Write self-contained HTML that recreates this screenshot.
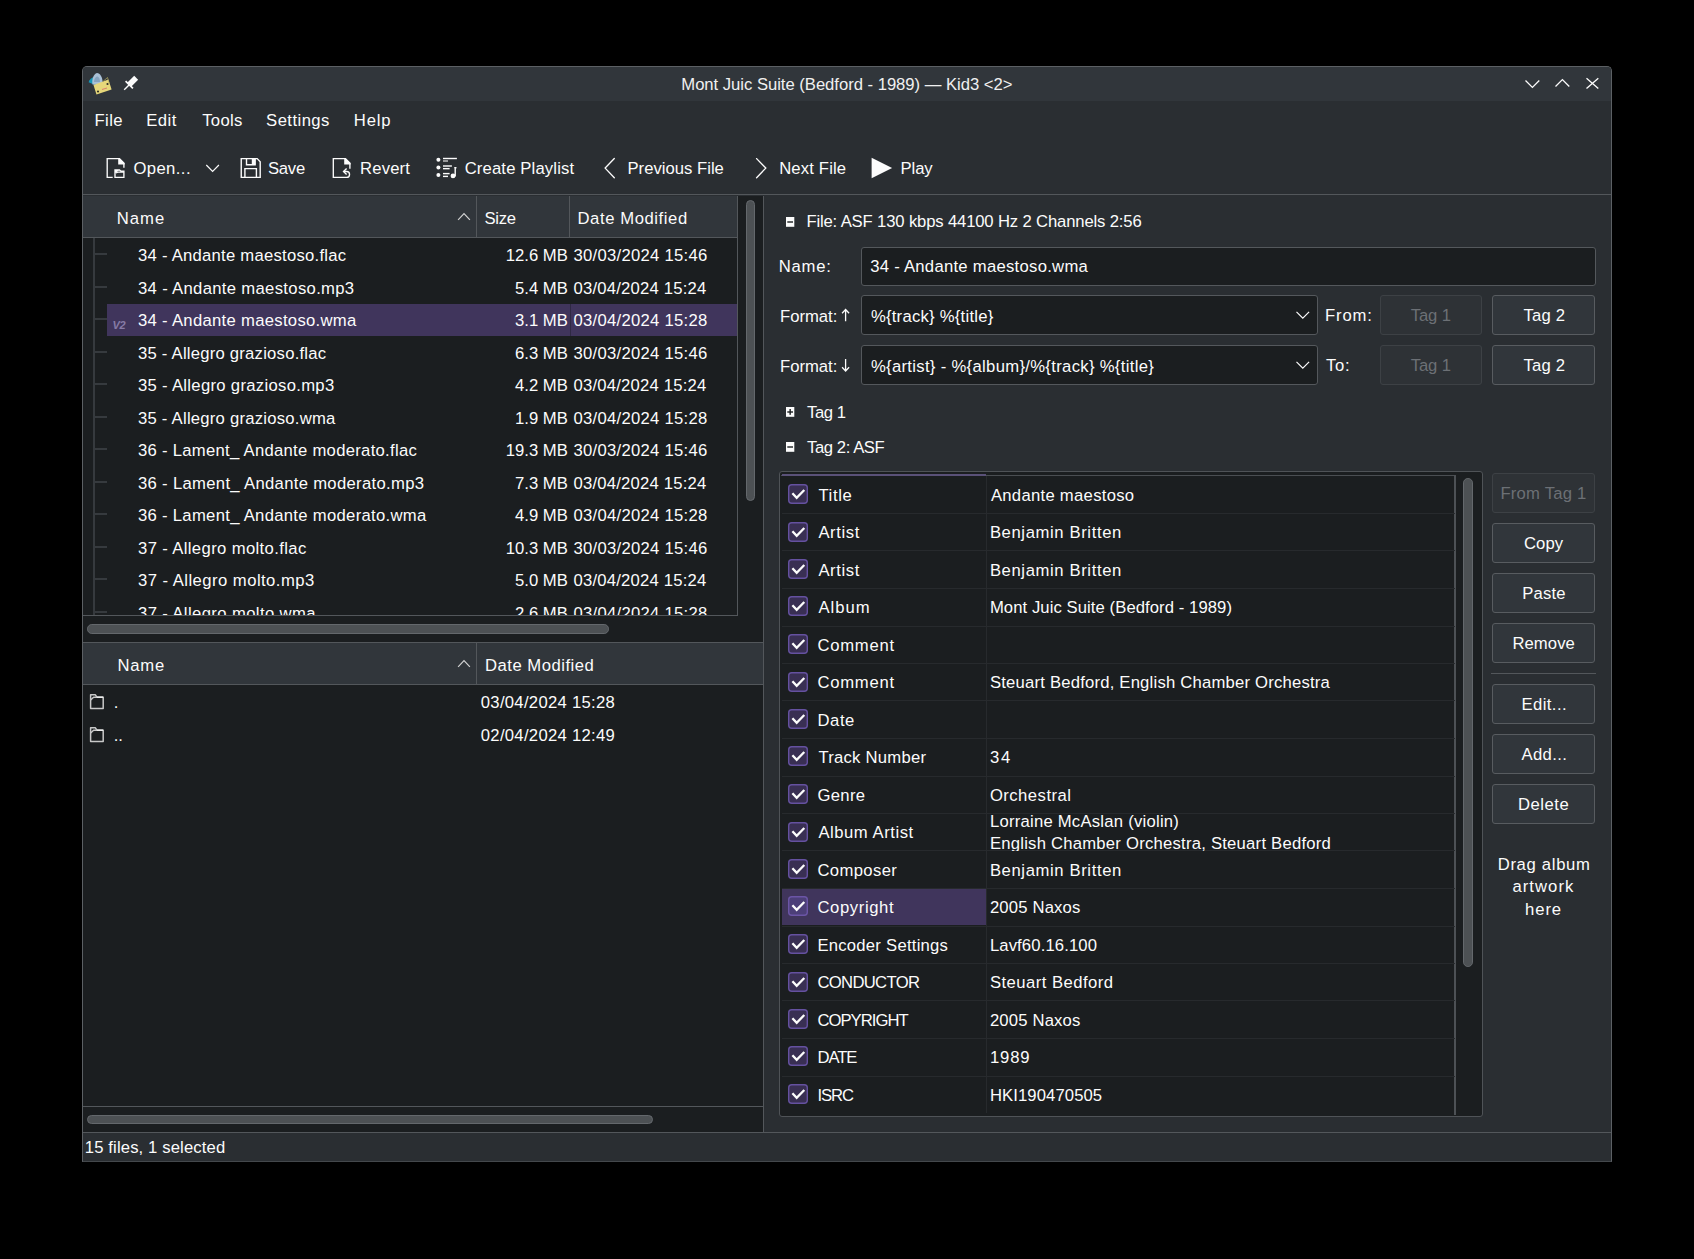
<!DOCTYPE html>
<html><head><meta charset="utf-8"><style>
html,body{margin:0;padding:0;background:#000;}
body{width:1694px;height:1259px;position:relative;overflow:hidden;font-family:"Liberation Sans",sans-serif;font-size:16.67px;color:#fcfcfc;}
div{position:absolute;}
.t{line-height:20px;white-space:pre;}
</style></head><body>
<div style="left:82px;top:66px;width:1530px;height:1096px;background:#2a2e32;border:1px solid #5c6064;border-bottom-color:#44484c;box-sizing:border-box;border-radius:5px 5px 0 0;"></div><div style="left:83px;top:67px;width:1528px;height:34px;background:#31363b;border-radius:4px 4px 0 0;"></div><svg style="position:absolute;left:70px;top:55px;" width="50" height="50" viewBox="0 0 50 50">
<path d="M18.6 27.3 C19.5 24.5 21.5 22.5 24 22 L25 30 Z" fill="#1596b8"/>
<path d="M22.5 29.5 C21.5 25 23.5 18.5 27 18 C30 18 32.5 22 32.6 27 L29 30 Z" fill="#a9c0d6"/>
<path d="M24 27 C24 24 25.5 21.5 27.5 21.5 C29 22 30 24 30 27 Z" fill="#86a3bf"/>
<path d="M23.5 30 L38.4 24.4 L41.6 34.6 L26.5 39.6 Z" fill="#e6d77a"/>
<path d="M33 26.5 L37.5 22.5 L39 28" fill="none" stroke="#b8ad60" stroke-width="0.7"/>
<circle cx="28" cy="36.5" r="1.1" fill="#2f3024"/><circle cx="37.5" cy="29" r="1.1" fill="#2f3024"/>
<path d="M32 34.5 L37 33" stroke="#d96a6a" stroke-width="0.8"/>
</svg><svg style="position:absolute;left:120px;top:74px;" width="20" height="20" viewBox="0 0 20 20">
<g transform="rotate(45 10 10)">
<rect x="7.2" y="1.3" width="5.6" height="9.5" fill="#fcfcfc"/>
<rect x="4.8" y="10.2" width="10.4" height="1.7" fill="#fcfcfc"/>
<rect x="9.3" y="11" width="1.4" height="7.2" fill="#fcfcfc"/>
</g></svg><div class="t" style="left:681.30px;top:74.50px;letter-spacing:-0.031px;color:#f0f0f0;">Mont Juic Suite (Bedford - 1989) — Kid3 &lt;2&gt;</div><svg style="position:absolute;left:1520px;top:72px;" width="90" height="24" viewBox="0 0 90 24">
<g fill="none" stroke="#fcfcfc" stroke-width="1.3">
<path d="M5.5 8.5 L12.4 15.4 L19.3 8.5"/>
<path d="M35.5 14.5 L42.4 7.6 L49.3 14.5"/>
<path d="M66.5 6.3 L78.3 16.6 M78.3 6.3 L66.5 16.6"/>
</g></svg><div class="t" style="left:94.50px;top:110.80px;letter-spacing:0.400px;">File</div><div class="t" style="left:146.30px;top:110.80px;letter-spacing:0.433px;">Edit</div><div class="t" style="left:202.20px;top:110.80px;letter-spacing:0.300px;">Tools</div><div class="t" style="left:266.10px;top:110.80px;letter-spacing:0.443px;">Settings</div><div class="t" style="left:353.80px;top:110.80px;letter-spacing:0.800px;">Help</div><svg style="position:absolute;left:100px;top:152px;" width="32" height="32" viewBox="0 0 32 32">
<g fill="none" stroke="#fcfcfc" stroke-width="1.35">
<path d="M12.7 25.4 H7.2 V6.6 H19.3 L23.9 11.2 V15.8"/>
<path d="M15 25.4 V18 H19.5 L21 19.2 H23.9 V25.4 Z"/>
<path d="M16 21 L17.6 20.1 H23.9"/>
</g>
<path d="M18.2 6.2 H19.8 L24.6 11 V12.4 H18.2 Z" fill="#fcfcfc"/>
<path d="M15 18 H19 L16 20.8 H15 Z" fill="#fcfcfc"/>
</svg><div class="t" style="left:133.40px;top:158.80px;letter-spacing:0.417px;">Open...</div><svg style="position:absolute;left:202px;top:160px;" width="20" height="16" viewBox="0 0 20 16"><path d="M4.3 5 L10.6 11.3 L16.9 5" fill="none" stroke="#fcfcfc" stroke-width="1.2"/></svg><svg style="position:absolute;left:234px;top:152px;" width="32" height="32" viewBox="0 0 32 32">
<g fill="none" stroke="#fcfcfc" stroke-width="1.4">
<path d="M7.24 6.6 H23.2 L26.2 9.8 V25.4 H7.24 Z"/>
<path d="M12.5 6.6 V12.8 H21.1 V6.6"/>
<path d="M10.9 25.4 V16.6 H22.4 V25.4"/>
</g>
<rect x="17.8" y="6.9" width="3.6" height="5.9" fill="#fcfcfc"/>
</svg><div class="t" style="left:268.00px;top:158.80px;letter-spacing:-0.267px;">Save</div><svg style="position:absolute;left:326px;top:152px;" width="32" height="32" viewBox="0 0 32 32">
<g fill="none" stroke="#fcfcfc" stroke-width="1.35">
<path d="M23.9 16.8 V11.2 L19.3 6.6 H7.3 V25.4 H20.6 A2.95 2.95 0 0 0 20.6 19.5 H17.8"/>
<path d="M20.6 16.4 L17.5 19.5 L20.6 22.6"/>
</g>
<path d="M18.2 6.2 H19.8 L24.6 11 V12.4 H18.2 Z" fill="#fcfcfc"/>
</svg><div class="t" style="left:360.00px;top:158.80px;letter-spacing:0.180px;">Revert</div><svg style="position:absolute;left:430px;top:152px;" width="32" height="32" viewBox="0 0 32 32">
<g fill="#fcfcfc">
<circle cx="8.4" cy="7.75" r="2"/><circle cx="8.4" cy="15.4" r="2"/><circle cx="8.4" cy="23" r="2"/>
<rect x="13" y="5.8" width="13.9" height="1.4"/><rect x="13" y="8.3" width="5" height="1.4" opacity="0.75"/>
<rect x="13" y="13.3" width="8.9" height="1.4"/><rect x="13" y="15.95" width="6.6" height="1.4"/>
<rect x="13" y="20.9" width="6.6" height="1.4"/><rect x="13" y="23.7" width="5" height="1.4"/>
<rect x="24.5" y="15" width="1.4" height="9.5"/><path d="M24.5 15 L26.8 15.4 L26.8 16.2 L24.5 16.2Z"/><circle cx="23" cy="23.9" r="2.4"/>
</g></svg><div class="t" style="left:464.70px;top:158.80px;letter-spacing:0.143px;">Create Playlist</div><svg style="position:absolute;left:596px;top:152px;" width="32" height="32" viewBox="0 0 32 32"><path d="M18.3 6.5 L9.15 16.1 L18.3 25.7" fill="none" stroke="#fcfcfc" stroke-width="1.35" stroke-linecap="round"/></svg><div class="t" style="left:627.50px;top:158.80px;letter-spacing:0.008px;">Previous File</div><svg style="position:absolute;left:748px;top:152px;" width="32" height="32" viewBox="0 0 32 32"><path d="M8.6 6.6 L17.8 16.1 L8.6 25.7" fill="none" stroke="#fcfcfc" stroke-width="1.35" stroke-linecap="round"/></svg><div class="t" style="left:779.20px;top:158.80px;letter-spacing:0.150px;">Next File</div><svg style="position:absolute;left:864px;top:152px;" width="32" height="32" viewBox="0 0 32 32"><path d="M7.6 5.7 L28.1 16.1 L7.6 26.2 Z" fill="#fcfcfc"/></svg><div class="t" style="left:900.40px;top:158.80px;letter-spacing:-0.033px;">Play</div><div style="left:83px;top:194px;width:1528px;height:1px;background:#53575b;"></div><div style="left:83px;top:196px;width:680px;height:936px;background:#1b1e20;"></div><div style="left:83px;top:196px;width:654px;height:41px;background:#31363b;"></div><div style="left:83px;top:237px;width:654px;height:1px;background:#53575b;"></div><div style="left:476px;top:196px;width:1px;height:41px;background:#53575b;"></div><div style="left:569px;top:196px;width:1px;height:41px;background:#53575b;"></div><div class="t" style="left:116.70px;top:208.80px;letter-spacing:1.067px;">Name</div><svg style="position:absolute;left:455px;top:210px;" width="18" height="12" viewBox="0 0 18 12"><path d="M3.1 9.8 L9 3.7 L14.9 9.8" fill="none" stroke="#d2d2d2" stroke-width="1.2"/></svg><div class="t" style="left:484.50px;top:208.80px;letter-spacing:-0.267px;">Size</div><div class="t" style="left:577.50px;top:208.80px;letter-spacing:0.575px;">Date Modified</div><div style="left:737px;top:196px;width:1px;height:420px;background:#53575b;"></div><div style="left:83px;top:615px;width:654px;height:1px;background:#53575b;"></div><div style="left:745.6px;top:200px;width:9.6px;height:301px;background:#4d5154;border:1px solid #64686c;box-sizing:border-box;border-radius:4.8px;"></div><div style="left:86.6px;top:624px;width:522.4px;height:9.7px;background:#4d5154;border:1px solid #64686c;box-sizing:border-box;border-radius:4.8px;"></div><div style="left:93px;top:238px;width:2px;height:377px;background:#363a3e;"></div><div style="left:83px;top:238px;width:654px;height:377px;overflow:hidden;"><div style="left:11px;top:15.3px;width:13px;height:2px;background:#363a3e;"></div><div class="t" style="left:55.00px;top:8.00px;letter-spacing:0.252px;">34 - Andante maestoso.flac</div><div class="t" style="left:364.8px;top:8.00px;width:120px;text-align:right;">12.6 MB</div><div class="t" style="left:490.50px;top:8.00px;letter-spacing:0.273px;">30/03/2024 15:46</div><div style="left:11px;top:47.8px;width:13px;height:2px;background:#363a3e;"></div><div class="t" style="left:55.00px;top:40.50px;letter-spacing:0.325px;">34 - Andante maestoso.mp3</div><div class="t" style="left:364.8px;top:40.50px;width:120px;text-align:right;">5.4 MB</div><div class="t" style="left:490.50px;top:40.50px;letter-spacing:0.207px;">03/04/2024 15:24</div><div style="left:24px;top:66px;width:630px;height:32px;background:#40355c;"></div><div style="left:487px;top:66px;width:1px;height:32px;background:#2f2944;"></div><div class="t" style="left:29.5px;top:77.4px;font-size:11px;font-weight:bold;font-style:italic;color:#867ba6;letter-spacing:-0.3px;">V2</div><div style="left:11px;top:80.3px;width:13px;height:2px;background:#363a3e;"></div><div class="t" style="left:55.00px;top:73.00px;letter-spacing:0.300px;">34 - Andante maestoso.wma</div><div class="t" style="left:364.8px;top:73.00px;width:120px;text-align:right;">3.1 MB</div><div class="t" style="left:490.50px;top:73.00px;letter-spacing:0.273px;">03/04/2024 15:28</div><div style="left:11px;top:112.8px;width:13px;height:2px;background:#363a3e;"></div><div class="t" style="left:55.00px;top:105.50px;letter-spacing:0.228px;">35 - Allegro grazioso.flac</div><div class="t" style="left:364.8px;top:105.50px;width:120px;text-align:right;">6.3 MB</div><div class="t" style="left:490.50px;top:105.50px;letter-spacing:0.273px;">30/03/2024 15:46</div><div style="left:11px;top:145.3px;width:13px;height:2px;background:#363a3e;"></div><div class="t" style="left:55.00px;top:138.00px;letter-spacing:0.304px;">35 - Allegro grazioso.mp3</div><div class="t" style="left:364.8px;top:138.00px;width:120px;text-align:right;">4.2 MB</div><div class="t" style="left:490.50px;top:138.00px;letter-spacing:0.207px;">03/04/2024 15:24</div><div style="left:11px;top:177.8px;width:13px;height:2px;background:#363a3e;"></div><div class="t" style="left:55.00px;top:170.50px;letter-spacing:0.237px;">35 - Allegro grazioso.wma</div><div class="t" style="left:364.8px;top:170.50px;width:120px;text-align:right;">1.9 MB</div><div class="t" style="left:490.50px;top:170.50px;letter-spacing:0.273px;">03/04/2024 15:28</div><div style="left:11px;top:210.3px;width:13px;height:2px;background:#363a3e;"></div><div class="t" style="left:55.00px;top:203.00px;letter-spacing:0.282px;">36 - Lament_ Andante moderato.flac</div><div class="t" style="left:364.8px;top:203.00px;width:120px;text-align:right;">19.3 MB</div><div class="t" style="left:490.50px;top:203.00px;letter-spacing:0.273px;">30/03/2024 15:46</div><div style="left:11px;top:242.8px;width:13px;height:2px;background:#363a3e;"></div><div class="t" style="left:55.00px;top:235.50px;letter-spacing:0.316px;">36 - Lament_ Andante moderato.mp3</div><div class="t" style="left:364.8px;top:235.50px;width:120px;text-align:right;">7.3 MB</div><div class="t" style="left:490.50px;top:235.50px;letter-spacing:0.207px;">03/04/2024 15:24</div><div style="left:11px;top:275.3px;width:13px;height:2px;background:#363a3e;"></div><div class="t" style="left:55.00px;top:268.00px;letter-spacing:0.297px;">36 - Lament_ Andante moderato.wma</div><div class="t" style="left:364.8px;top:268.00px;width:120px;text-align:right;">4.9 MB</div><div class="t" style="left:490.50px;top:268.00px;letter-spacing:0.273px;">03/04/2024 15:28</div><div style="left:11px;top:307.8px;width:13px;height:2px;background:#363a3e;"></div><div class="t" style="left:55.00px;top:300.50px;letter-spacing:0.368px;">37 - Allegro molto.flac</div><div class="t" style="left:364.8px;top:300.50px;width:120px;text-align:right;">10.3 MB</div><div class="t" style="left:490.50px;top:300.50px;letter-spacing:0.273px;">30/03/2024 15:46</div><div style="left:11px;top:340.3px;width:13px;height:2px;background:#363a3e;"></div><div class="t" style="left:55.00px;top:333.00px;letter-spacing:0.457px;">37 - Allegro molto.mp3</div><div class="t" style="left:364.8px;top:333.00px;width:120px;text-align:right;">5.0 MB</div><div class="t" style="left:490.50px;top:333.00px;letter-spacing:0.207px;">03/04/2024 15:24</div><div style="left:11px;top:372.8px;width:13px;height:2px;background:#363a3e;"></div><div class="t" style="left:55.00px;top:365.50px;letter-spacing:0.386px;">37 - Allegro molto.wma</div><div class="t" style="left:364.8px;top:365.50px;width:120px;text-align:right;">2.6 MB</div><div class="t" style="left:490.50px;top:365.50px;letter-spacing:0.273px;">03/04/2024 15:28</div></div><div style="left:83px;top:642px;width:680px;height:1px;background:#53575b;"></div><div style="left:83px;top:643px;width:680px;height:41px;background:#31363b;"></div><div style="left:83px;top:684px;width:680px;height:1px;background:#53575b;"></div><div style="left:476px;top:643px;width:1px;height:41px;background:#53575b;"></div><div class="t" style="left:117.50px;top:655.80px;letter-spacing:0.767px;">Name</div><svg style="position:absolute;left:455px;top:657px;" width="18" height="12" viewBox="0 0 18 12"><path d="M3.1 9.8 L9 3.7 L14.9 9.8" fill="none" stroke="#d2d2d2" stroke-width="1.2"/></svg><div class="t" style="left:485.00px;top:655.80px;letter-spacing:0.500px;">Date Modified</div><svg style="position:absolute;left:84px;top:688.0px;" width="24" height="24" viewBox="0 0 24 24"><g fill="none" stroke="#c8c8c8" stroke-width="1.5" stroke-linejoin="round"><path d="M6.6 20.4 V6.8 H11.4 L12.9 9.2 H19.2 V20.4 Z"/><path d="M6.6 12 L9.6 9.2 H13"/></g><path d="M12.9 9.2 H19.2" stroke="#f0f0f0" stroke-width="1.5"/></svg><div class="t" style="left:113.7px;top:692.50px;">.</div><div class="t" style="left:480.80px;top:693.00px;letter-spacing:0.287px;">03/04/2024 15:28</div><svg style="position:absolute;left:84px;top:720.8px;" width="24" height="24" viewBox="0 0 24 24"><g fill="none" stroke="#c8c8c8" stroke-width="1.5" stroke-linejoin="round"><path d="M6.6 20.4 V6.8 H11.4 L12.9 9.2 H19.2 V20.4 Z"/><path d="M6.6 12 L9.6 9.2 H13"/></g><path d="M12.9 9.2 H19.2" stroke="#f0f0f0" stroke-width="1.5"/></svg><div class="t" style="left:113.7px;top:725.50px;">..</div><div class="t" style="left:480.80px;top:726.00px;letter-spacing:0.287px;">02/04/2024 12:49</div><div style="left:83px;top:1106px;width:680px;height:1px;background:#53575b;"></div><div style="left:86.6px;top:1114.8px;width:566px;height:9.6px;background:#4d5154;border:1px solid #64686c;box-sizing:border-box;border-radius:4.8px;"></div><div style="left:763px;top:196px;width:1px;height:936px;background:#53575b;"></div><div style="left:83px;top:1132px;width:1528px;height:1px;background:#53575b;"></div><div class="t" style="left:84.80px;top:1137.70px;letter-spacing:0.126px;">15 files, 1 selected</div><svg style="position:absolute;left:786px;top:217px;" width="9" height="10" viewBox="0 0 9 10"><rect x="0" y="0" width="8.3" height="9.8" fill="#fcfcfc"/><rect x="1.3" y="4.3" width="5.7" height="1.4" fill="#1b1e20"/></svg><div class="t" style="left:806.40px;top:212.00px;letter-spacing:-0.152px;">File: ASF 130 kbps 44100 Hz 2 Channels 2:56</div><div class="t" style="left:778.80px;top:257.00px;letter-spacing:0.725px;">Name:</div><div style="left:861px;top:247px;width:735px;height:39px;background:#1b1e20;border:1px solid #54585c;box-sizing:border-box;border-radius:3px;"></div><div class="t" style="left:870.20px;top:257.00px;letter-spacing:0.271px;">34 - Andante maestoso.wma</div><div class="t" style="left:780px;top:306.50px;">Format:</div><svg style="position:absolute;left:836px;top:304px;" width="20" height="22" viewBox="0 0 20 22"><g fill="none" stroke="#fcfcfc" stroke-width="1.3"><path d="M9.6 5.4 V17.3 M6.1 9.2 L9.6 5.5 L13.1 9.2"/></g></svg><div style="left:861px;top:295px;width:457px;height:40px;background:#1b1e20;border:1px solid #54585c;box-sizing:border-box;border-radius:3px;"></div><div class="t" style="left:870.90px;top:306.50px;letter-spacing:0.244px;">%{track} %{title}</div><svg style="position:absolute;left:1292px;top:306px;" width="20" height="16" viewBox="0 0 20 16"><path d="M4.5 5.8 L10.8 12.1 L17.1 5.8" fill="none" stroke="#fcfcfc" stroke-width="1.2"/></svg><div class="t" style="left:1325.10px;top:305.80px;letter-spacing:0.800px;">From:</div><div class="t" style="left:780px;top:356.50px;">Format:</div><svg style="position:absolute;left:836px;top:354px;" width="20" height="22" viewBox="0 0 20 22"><g fill="none" stroke="#fcfcfc" stroke-width="1.3"><path d="M9.6 5 V17 M6.1 13.3 L9.6 17 L13.1 13.3"/></g></svg><div style="left:861px;top:345px;width:457px;height:40px;background:#1b1e20;border:1px solid #54585c;box-sizing:border-box;border-radius:3px;"></div><div class="t" style="left:870.90px;top:356.50px;letter-spacing:0.314px;">%{artist} - %{album}/%{track} %{title}</div><svg style="position:absolute;left:1292px;top:356px;" width="20" height="16" viewBox="0 0 20 16"><path d="M4.5 5.8 L10.8 12.1 L17.1 5.8" fill="none" stroke="#fcfcfc" stroke-width="1.2"/></svg><div class="t" style="left:1326.10px;top:355.80px;letter-spacing:0.650px;">To:</div><div style="left:1380px;top:295px;width:102px;height:40px;background:#2e3236;border:1px solid #3d4145;box-sizing:border-box;border-radius:3px;"></div><div class="t" style="left:1410.80px;top:306.30px;letter-spacing:-0.150px;color:#6c7075;">Tag 1</div><div style="left:1492px;top:295px;width:103px;height:40px;background:#31363b;border:1px solid #585c60;box-sizing:border-box;border-radius:3px;"></div><div class="t" style="left:1523.60px;top:306.30px;letter-spacing:0.150px;">Tag 2</div><div style="left:1380px;top:345px;width:102px;height:40px;background:#2e3236;border:1px solid #3d4145;box-sizing:border-box;border-radius:3px;"></div><div class="t" style="left:1410.80px;top:356.30px;letter-spacing:-0.150px;color:#6c7075;">Tag 1</div><div style="left:1492px;top:345px;width:103px;height:40px;background:#31363b;border:1px solid #585c60;box-sizing:border-box;border-radius:3px;"></div><div class="t" style="left:1523.60px;top:356.30px;letter-spacing:0.150px;">Tag 2</div><svg style="position:absolute;left:786px;top:407px;" width="9" height="10" viewBox="0 0 9 10"><rect x="0" y="0" width="8.3" height="9.8" fill="#fcfcfc"/><rect x="1.3" y="4.3" width="5.7" height="1.4" fill="#1b1e20"/><rect x="3.45" y="2" width="1.4" height="5.8" fill="#1b1e20"/></svg><div class="t" style="left:807.10px;top:402.50px;letter-spacing:-0.450px;">Tag 1</div><svg style="position:absolute;left:786px;top:442px;" width="9" height="10" viewBox="0 0 9 10"><rect x="0" y="0" width="8.3" height="9.8" fill="#fcfcfc"/><rect x="1.3" y="4.3" width="5.7" height="1.4" fill="#1b1e20"/></svg><div class="t" style="left:807.10px;top:437.50px;letter-spacing:-0.433px;">Tag 2: ASF</div><div style="left:779px;top:471px;width:704px;height:646px;background:#1b1e20;border:1.3px solid #4f5357;box-sizing:border-box;border-radius:3px;"></div><div style="left:781px;top:474.6px;width:675px;height:1.6px;background:#4a4e52;border-top-right-radius:2px;"></div><div style="left:782px;top:474.4px;width:204px;height:2px;background:#5a5178;"></div><div style="left:1454.4px;top:475px;width:1.8px;height:640px;background:#4d5155;"></div><div style="left:1463.2px;top:478px;width:9.8px;height:488.7px;background:#4d5154;border:1px solid #64686c;box-sizing:border-box;border-radius:4.9px;"></div><div style="left:782px;top:513px;width:673px;height:1px;background:#272a2d;"></div><svg style="position:absolute;left:787px;top:483px;" width="22" height="22" viewBox="0 0 22 22"><rect x="1.7" y="1.7" width="18.6" height="18.6" rx="3" fill="#392f53" stroke="#6551a0" stroke-width="1.4"/><path d="M5.4 10.2 L9.7 14.8 L17.3 7.0" fill="none" stroke="#fcfcfc" stroke-width="2.3"/></svg><div class="t" style="left:818.40px;top:485.80px;letter-spacing:0.650px;">Title</div><div class="t" style="left:990.90px;top:485.80px;letter-spacing:0.287px;">Andante maestoso</div><div style="left:782px;top:550px;width:673px;height:1px;background:#272a2d;"></div><svg style="position:absolute;left:787px;top:521px;" width="22" height="22" viewBox="0 0 22 22"><rect x="1.7" y="1.7" width="18.6" height="18.6" rx="3" fill="#392f53" stroke="#6551a0" stroke-width="1.4"/><path d="M5.4 10.2 L9.7 14.8 L17.3 7.0" fill="none" stroke="#fcfcfc" stroke-width="2.3"/></svg><div class="t" style="left:818.40px;top:523.30px;letter-spacing:0.620px;">Artist</div><div class="t" style="left:989.90px;top:523.30px;letter-spacing:0.613px;">Benjamin Britten</div><div style="left:782px;top:588px;width:673px;height:1px;background:#272a2d;"></div><svg style="position:absolute;left:787px;top:558px;" width="22" height="22" viewBox="0 0 22 22"><rect x="1.7" y="1.7" width="18.6" height="18.6" rx="3" fill="#392f53" stroke="#6551a0" stroke-width="1.4"/><path d="M5.4 10.2 L9.7 14.8 L17.3 7.0" fill="none" stroke="#fcfcfc" stroke-width="2.3"/></svg><div class="t" style="left:818.40px;top:560.80px;letter-spacing:0.620px;">Artist</div><div class="t" style="left:989.90px;top:560.80px;letter-spacing:0.613px;">Benjamin Britten</div><div style="left:782px;top:626px;width:673px;height:1px;background:#272a2d;"></div><svg style="position:absolute;left:787px;top:595px;" width="22" height="22" viewBox="0 0 22 22"><rect x="1.7" y="1.7" width="18.6" height="18.6" rx="3" fill="#392f53" stroke="#6551a0" stroke-width="1.4"/><path d="M5.4 10.2 L9.7 14.8 L17.3 7.0" fill="none" stroke="#fcfcfc" stroke-width="2.3"/></svg><div class="t" style="left:818.40px;top:598.30px;letter-spacing:0.975px;">Album</div><div class="t" style="left:989.90px;top:598.30px;letter-spacing:0.074px;">Mont Juic Suite (Bedford - 1989)</div><div style="left:782px;top:663px;width:673px;height:1px;background:#272a2d;"></div><svg style="position:absolute;left:787px;top:633px;" width="22" height="22" viewBox="0 0 22 22"><rect x="1.7" y="1.7" width="18.6" height="18.6" rx="3" fill="#392f53" stroke="#6551a0" stroke-width="1.4"/><path d="M5.4 10.2 L9.7 14.8 L17.3 7.0" fill="none" stroke="#fcfcfc" stroke-width="2.3"/></svg><div class="t" style="left:817.40px;top:635.80px;letter-spacing:0.750px;">Comment</div><div style="left:782px;top:700px;width:673px;height:1px;background:#272a2d;"></div><svg style="position:absolute;left:787px;top:671px;" width="22" height="22" viewBox="0 0 22 22"><rect x="1.7" y="1.7" width="18.6" height="18.6" rx="3" fill="#392f53" stroke="#6551a0" stroke-width="1.4"/><path d="M5.4 10.2 L9.7 14.8 L17.3 7.0" fill="none" stroke="#fcfcfc" stroke-width="2.3"/></svg><div class="t" style="left:817.40px;top:673.30px;letter-spacing:0.750px;">Comment</div><div class="t" style="left:989.90px;top:673.30px;letter-spacing:0.207px;">Steuart Bedford, English Chamber Orchestra</div><div style="left:782px;top:738px;width:673px;height:1px;background:#272a2d;"></div><svg style="position:absolute;left:787px;top:708px;" width="22" height="22" viewBox="0 0 22 22"><rect x="1.7" y="1.7" width="18.6" height="18.6" rx="3" fill="#392f53" stroke="#6551a0" stroke-width="1.4"/><path d="M5.4 10.2 L9.7 14.8 L17.3 7.0" fill="none" stroke="#fcfcfc" stroke-width="2.3"/></svg><div class="t" style="left:817.40px;top:710.80px;letter-spacing:0.600px;">Date</div><div style="left:782px;top:776px;width:673px;height:1px;background:#272a2d;"></div><svg style="position:absolute;left:787px;top:745px;" width="22" height="22" viewBox="0 0 22 22"><rect x="1.7" y="1.7" width="18.6" height="18.6" rx="3" fill="#392f53" stroke="#6551a0" stroke-width="1.4"/><path d="M5.4 10.2 L9.7 14.8 L17.3 7.0" fill="none" stroke="#fcfcfc" stroke-width="2.3"/></svg><div class="t" style="left:818.40px;top:748.30px;letter-spacing:0.245px;">Track Number</div><div class="t" style="left:989.90px;top:748.30px;letter-spacing:1.800px;">34</div><div style="left:782px;top:813px;width:673px;height:1px;background:#272a2d;"></div><svg style="position:absolute;left:787px;top:783px;" width="22" height="22" viewBox="0 0 22 22"><rect x="1.7" y="1.7" width="18.6" height="18.6" rx="3" fill="#392f53" stroke="#6551a0" stroke-width="1.4"/><path d="M5.4 10.2 L9.7 14.8 L17.3 7.0" fill="none" stroke="#fcfcfc" stroke-width="2.3"/></svg><div class="t" style="left:817.40px;top:785.80px;letter-spacing:0.350px;">Genre</div><div class="t" style="left:989.90px;top:785.80px;letter-spacing:0.467px;">Orchestral</div><div style="left:782px;top:850px;width:673px;height:1px;background:#272a2d;"></div><svg style="position:absolute;left:787px;top:821px;" width="22" height="22" viewBox="0 0 22 22"><rect x="1.7" y="1.7" width="18.6" height="18.6" rx="3" fill="#392f53" stroke="#6551a0" stroke-width="1.4"/><path d="M5.4 10.2 L9.7 14.8 L17.3 7.0" fill="none" stroke="#fcfcfc" stroke-width="2.3"/></svg><div class="t" style="left:818.40px;top:823.30px;letter-spacing:0.536px;">Album Artist</div><div style="left:986px;top:813.50px;width:469px;height:37px;overflow:hidden;"><div class="t" style="left:3.90px;top:-1.20px;letter-spacing:0.237px;">Lorraine McAslan (violin)</div><div class="t" style="left:3.90px;top:20.80px;letter-spacing:0.232px;">English Chamber Orchestra, Steuart Bedford</div></div><div style="left:782px;top:888px;width:673px;height:1px;background:#272a2d;"></div><svg style="position:absolute;left:787px;top:858px;" width="22" height="22" viewBox="0 0 22 22"><rect x="1.7" y="1.7" width="18.6" height="18.6" rx="3" fill="#392f53" stroke="#6551a0" stroke-width="1.4"/><path d="M5.4 10.2 L9.7 14.8 L17.3 7.0" fill="none" stroke="#fcfcfc" stroke-width="2.3"/></svg><div class="t" style="left:817.40px;top:860.80px;letter-spacing:0.371px;">Composer</div><div class="t" style="left:989.90px;top:860.80px;letter-spacing:0.613px;">Benjamin Britten</div><div style="left:782px;top:889px;width:204px;height:36px;background:#40355c;"></div><div style="left:782px;top:926px;width:673px;height:1px;background:#272a2d;"></div><svg style="position:absolute;left:787px;top:895px;" width="22" height="22" viewBox="0 0 22 22"><rect x="1.7" y="1.7" width="18.6" height="18.6" rx="3" fill="#4c3f78" stroke="#6b55a6" stroke-width="1.4"/><path d="M5.4 10.2 L9.7 14.8 L17.3 7.0" fill="none" stroke="#fcfcfc" stroke-width="2.3"/></svg><div class="t" style="left:817.40px;top:898.30px;letter-spacing:0.612px;">Copyright</div><div class="t" style="left:989.90px;top:898.30px;letter-spacing:0.178px;">2005 Naxos</div><div style="left:782px;top:963px;width:673px;height:1px;background:#272a2d;"></div><svg style="position:absolute;left:787px;top:933px;" width="22" height="22" viewBox="0 0 22 22"><rect x="1.7" y="1.7" width="18.6" height="18.6" rx="3" fill="#392f53" stroke="#6551a0" stroke-width="1.4"/><path d="M5.4 10.2 L9.7 14.8 L17.3 7.0" fill="none" stroke="#fcfcfc" stroke-width="2.3"/></svg><div class="t" style="left:817.40px;top:935.80px;letter-spacing:0.247px;">Encoder Settings</div><div class="t" style="left:989.90px;top:935.80px;letter-spacing:0.125px;">Lavf60.16.100</div><div style="left:782px;top:1000px;width:673px;height:1px;background:#272a2d;"></div><svg style="position:absolute;left:787px;top:971px;" width="22" height="22" viewBox="0 0 22 22"><rect x="1.7" y="1.7" width="18.6" height="18.6" rx="3" fill="#392f53" stroke="#6551a0" stroke-width="1.4"/><path d="M5.4 10.2 L9.7 14.8 L17.3 7.0" fill="none" stroke="#fcfcfc" stroke-width="2.3"/></svg><div class="t" style="left:817.40px;top:973.30px;letter-spacing:-0.675px;">CONDUCTOR</div><div class="t" style="left:989.90px;top:973.30px;letter-spacing:0.457px;">Steuart Bedford</div><div style="left:782px;top:1038px;width:673px;height:1px;background:#272a2d;"></div><svg style="position:absolute;left:787px;top:1008px;" width="22" height="22" viewBox="0 0 22 22"><rect x="1.7" y="1.7" width="18.6" height="18.6" rx="3" fill="#392f53" stroke="#6551a0" stroke-width="1.4"/><path d="M5.4 10.2 L9.7 14.8 L17.3 7.0" fill="none" stroke="#fcfcfc" stroke-width="2.3"/></svg><div class="t" style="left:817.40px;top:1010.80px;letter-spacing:-0.975px;">COPYRIGHT</div><div class="t" style="left:989.90px;top:1010.80px;letter-spacing:0.178px;">2005 Naxos</div><div style="left:782px;top:1076px;width:673px;height:1px;background:#272a2d;"></div><svg style="position:absolute;left:787px;top:1045px;" width="22" height="22" viewBox="0 0 22 22"><rect x="1.7" y="1.7" width="18.6" height="18.6" rx="3" fill="#392f53" stroke="#6551a0" stroke-width="1.4"/><path d="M5.4 10.2 L9.7 14.8 L17.3 7.0" fill="none" stroke="#fcfcfc" stroke-width="2.3"/></svg><div class="t" style="left:817.40px;top:1048.30px;letter-spacing:-1.033px;">DATE</div><div class="t" style="left:989.90px;top:1048.30px;letter-spacing:0.867px;">1989</div><svg style="position:absolute;left:787px;top:1083px;" width="22" height="22" viewBox="0 0 22 22"><rect x="1.7" y="1.7" width="18.6" height="18.6" rx="3" fill="#392f53" stroke="#6551a0" stroke-width="1.4"/><path d="M5.4 10.2 L9.7 14.8 L17.3 7.0" fill="none" stroke="#fcfcfc" stroke-width="2.3"/></svg><div class="t" style="left:817.40px;top:1085.80px;letter-spacing:-1.067px;">ISRC</div><div class="t" style="left:989.90px;top:1085.80px;letter-spacing:0.100px;">HKI190470505</div><div style="left:986px;top:476px;width:1px;height:637px;background:#272a2d;"></div><div style="left:1492px;top:473px;width:103px;height:40px;background:#2e3236;border:1px solid #3d4145;box-sizing:border-box;border-radius:3px;"></div><div class="t" style="left:1500.50px;top:484.30px;letter-spacing:0.200px;color:#6c7075;">From Tag 1</div><div style="left:1492px;top:523px;width:103px;height:40px;background:#31363b;border:1px solid #585c60;box-sizing:border-box;border-radius:3px;"></div><div class="t" style="left:1523.90px;top:534.30px;letter-spacing:0.133px;">Copy</div><div style="left:1492px;top:573px;width:103px;height:40px;background:#31363b;border:1px solid #585c60;box-sizing:border-box;border-radius:3px;"></div><div class="t" style="left:1522.20px;top:584.30px;letter-spacing:0.200px;">Paste</div><div style="left:1492px;top:623px;width:103px;height:40px;background:#31363b;border:1px solid #585c60;box-sizing:border-box;border-radius:3px;"></div><div class="t" style="left:1512.40px;top:634.30px;letter-spacing:0.080px;">Remove</div><div style="left:1491px;top:673px;width:105px;height:1.3px;background:#53575b;"></div><div style="left:1492px;top:684px;width:103px;height:40px;background:#31363b;border:1px solid #585c60;box-sizing:border-box;border-radius:3px;"></div><div class="t" style="left:1521.50px;top:695.30px;letter-spacing:0.417px;">Edit...</div><div style="left:1492px;top:734px;width:103px;height:40px;background:#31363b;border:1px solid #585c60;box-sizing:border-box;border-radius:3px;"></div><div class="t" style="left:1521.40px;top:745.30px;letter-spacing:0.400px;">Add...</div><div style="left:1492px;top:784px;width:103px;height:40px;background:#31363b;border:1px solid #585c60;box-sizing:border-box;border-radius:3px;"></div><div class="t" style="left:1518.00px;top:795.30px;letter-spacing:0.500px;">Delete</div><div class="t" style="left:1497.70px;top:854.50px;letter-spacing:0.678px;">Drag album</div><div class="t" style="left:1512.40px;top:876.50px;letter-spacing:1.067px;">artwork</div><div class="t" style="left:1525.00px;top:899.50px;letter-spacing:0.933px;">here</div>
</body></html>
